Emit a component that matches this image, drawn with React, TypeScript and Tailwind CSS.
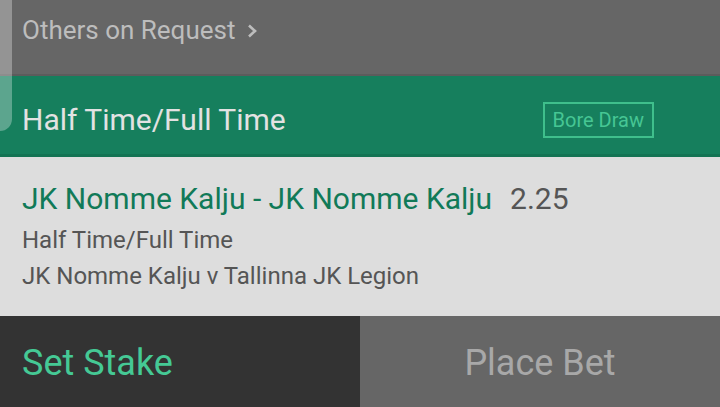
export default function App() {
  const font = { fontFamily: "Roboto, 'Noto Sans', sans-serif" };

  return (
    <div className="relative w-[720px] h-[407px] overflow-hidden flex flex-col" style={font}>
      {/* Others on request */}
      <div className="h-[74px] bg-[#666666] flex items-start px-[22px] pt-[14px]">
        <span className="text-[26px] leading-[32px] text-[#bdbdbd]">Others on Request</span>
        <svg className="ml-[12px] mt-[10px]" width="10" height="14" viewBox="0 0 10 14">
          <polyline points="2,1.5 8,7 2,12.5" fill="none" stroke="#bdbdbd" strokeWidth="2.6" />
        </svg>
      </div>
      <div className="h-[2px] bg-[#5c5c5c]" />

      {/* Market header */}
      <div className="h-[78px] bg-[#167f5d] flex items-center justify-between pl-[22px] pr-[66px] pt-[9px]">
        <span className="text-[30px] leading-[36px] text-[#e2e2e2]">Half Time/Full Time</span>
        <span className="border-2 border-[#3fbf8c] h-[36px] px-[8px] flex items-center text-[20px] text-[#46c694]">
          Bore Draw
        </span>
      </div>
      <div className="h-[3px] bg-[#137353]" />

      {/* Selection */}
      <div className="h-[159px] bg-[#dddddd] px-[22px] pt-[22px]">
        <div className="flex items-baseline gap-[18px]">
          <span className="text-[30px] leading-[40px] text-[#117a58]">JK Nomme Kalju - JK Nomme Kalju</span>
          <span className="text-[30px] leading-[40px] text-[#555555]">2.25</span>
        </div>
        <div className="text-[24px] leading-[35px] text-[#555555] mt-[4px]">Half Time/Full Time</div>
        <div className="text-[24px] leading-[35px] text-[#555555] mt-[1px]">JK Nomme Kalju v Tallinna JK Legion</div>
      </div>

      {/* Actions */}
      <div className="flex-1 flex">
        <div className="w-[360px] bg-[#333333] flex items-center px-[22px] pt-[2px]">
          <span className="text-[36px] text-[#45c995]">Set Stake</span>
        </div>
        <div className="flex-1 bg-[#666666] flex items-center justify-center pt-[2px]">
          <span className="text-[36px] text-[#a8a8a8]">Place Bet</span>
        </div>
      </div>

      {/* scroll handle overlay */}
      <div className="absolute left-0 top-0 w-[12px] h-[131px] rounded-br-[12px] bg-white/30" />
    </div>
  );
}
